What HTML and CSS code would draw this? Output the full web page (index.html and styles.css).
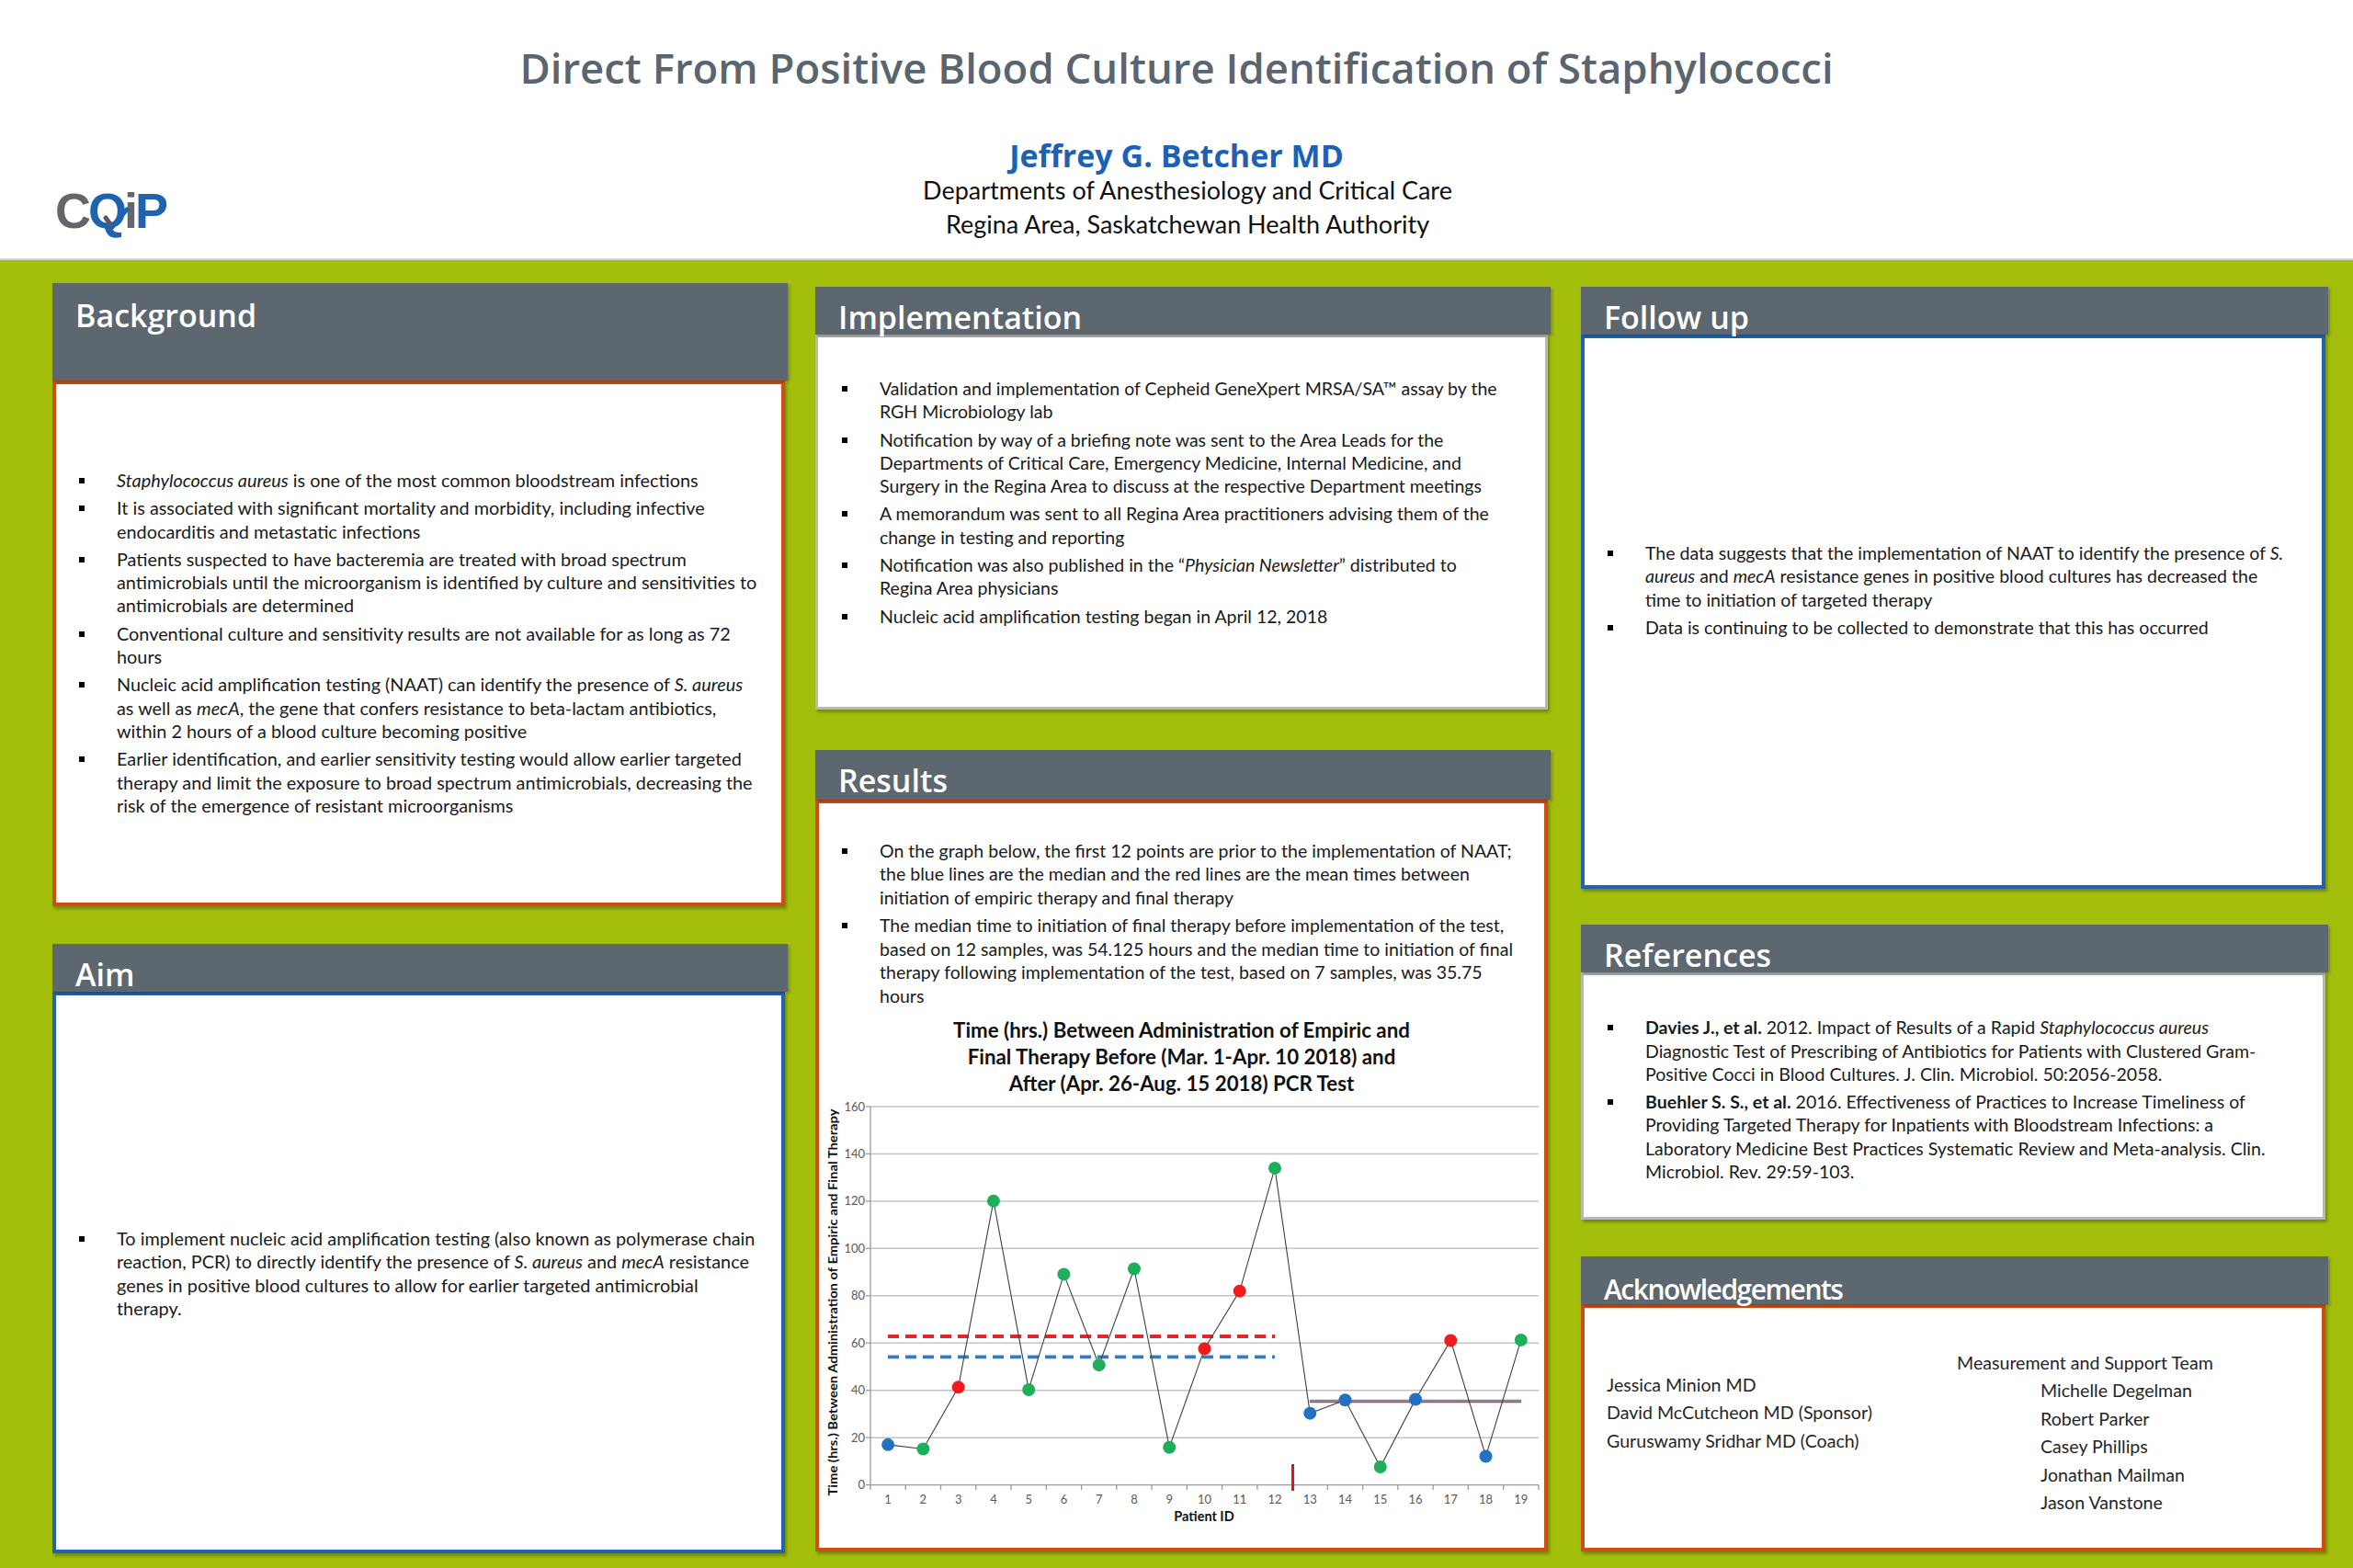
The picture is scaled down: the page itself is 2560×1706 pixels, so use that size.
FILE: index.html
```html
<!DOCTYPE html>
<html lang="en">
<head>
<meta charset="utf-8">
<title>Direct From Positive Blood Culture Identification of Staphylococci</title>
<link rel="stylesheet" href="styles.css">
</head>
<body>
<header class="top">
  <div class="logo">
    <span class="lg-grey">C</span><span class="lg-blue">Q</span><span class="lg-grey">i</span><span class="lg-blue">P</span>
    <svg class="lg-check" width="40" height="30" viewBox="0 0 40 30">
      <path d="M3 12 L10 22" stroke="#555b61" stroke-width="5" stroke-linecap="round" fill="none"/>
      <path d="M10 22 L26 3" stroke="#1f63b0" stroke-width="5" stroke-linecap="round" fill="none"/>
    </svg>
  </div>
  <div class="titles">
    <h1 class="title">Direct From Positive Blood Culture Identification of Staphylococci</h1>
    <div class="author">Jeffrey G. Betcher MD</div>
    <div class="dept">Departments of Anesthesiology and Critical Care</div>
    <div class="dept">Regina Area, Saskatchewan Health Authority</div>
  </div>
</header>

<main class="board">
  <section class="col col1">
    <div class="panel">
      <h2 class="ph ph-tall">Background</h2>
      <div class="pb b-orange body-bg">
        <ul class="bl">
          <li><span><i>Staphylococcus aureus</i> is one of the most common bloodstream infections</span></li>
          <li><span>It is associated with significant mortality and morbidity, including infective<br>endocarditis and metastatic infections</span></li>
          <li><span>Patients suspected to have bacteremia are treated with broad spectrum<br>antimicrobials until the microorganism is identified by culture and sensitivities to<br>antimicrobials are determined</span></li>
          <li><span>Conventional culture and sensitivity results are not available for as long as 72<br>hours</span></li>
          <li><span>Nucleic acid amplification testing (NAAT) can identify the presence of <i>S. aureus</i><br>as well as <i>mecA</i>, the gene that confers resistance to beta-lactam antibiotics,<br>within 2 hours of a blood culture becoming positive</span></li>
          <li><span>Earlier identification, and earlier sensitivity testing would allow earlier targeted<br>therapy and limit the exposure to broad spectrum antimicrobials, decreasing the<br>risk of the emergence of resistant microorganisms</span></li>
        </ul>
      </div>
    </div>
    <div class="panel gap-aim">
      <h2 class="ph">Aim</h2>
      <div class="pb b-blue body-aim">
        <ul class="bl">
          <li><span>To implement nucleic acid amplification testing (also known as polymerase chain<br>reaction, PCR) to directly identify the presence of <i>S. aureus</i> and <i>mecA</i> resistance<br>genes in positive blood cultures to allow for earlier targeted antimicrobial<br>therapy.</span></li>
        </ul>
      </div>
    </div>
  </section>

  <section class="col col2">
    <div class="panel">
      <h2 class="ph">Implementation</h2>
      <div class="pb b-grey body-impl">
        <ul class="bl">
          <li><span>Validation and implementation of Cepheid GeneXpert MRSA/SA™ assay by the<br>RGH Microbiology lab</span></li>
          <li><span>Notification by way of a briefing note was sent to the Area Leads for the<br>Departments of Critical Care, Emergency Medicine, Internal Medicine, and<br>Surgery in the Regina Area to discuss at the respective Department meetings</span></li>
          <li><span>A memorandum was sent to all Regina Area practitioners advising them of the<br>change in testing and reporting</span></li>
          <li><span>Notification was also published in the “<i>Physician Newsletter</i>” distributed to<br>Regina Area physicians</span></li>
          <li><span>Nucleic acid amplification testing began in April 12, 2018</span></li>
        </ul>
      </div>
    </div>
    <div class="panel gap-res">
      <h2 class="ph ph-res">Results</h2>
      <div class="pb b-orange body-res">
        <ul class="bl">
          <li><span>On the graph below, the first 12 points are prior to the implementation of NAAT;<br>the blue lines are the median and the red lines are the mean times between<br>initiation of empiric therapy and final therapy</span></li>
          <li><span>The median time to initiation of final therapy before implementation of the test,<br>based on 12 samples, was 54.125 hours and the median time to initiation of final<br>therapy following implementation of the test, based on 7 samples, was 35.75<br>hours</span></li>
        </ul>
        <div class="chart-title">Time (hrs.) Between Administration of Empiric and<br>Final Therapy Before (Mar. 1-Apr. 10 2018) and<br>After (Apr. 26-Aug. 15 2018) PCR Test</div>
        <svg class="chart" width="789" height="470" viewBox="0 0 789 470">
          <g stroke="#c4c4c4" stroke-width="1.5">
            <line x1="56" y1="11" x2="783" y2="11"/>
            <line x1="56" y1="62.45" x2="783" y2="62.45"/>
            <line x1="56" y1="113.9" x2="783" y2="113.9"/>
            <line x1="56" y1="165.35" x2="783" y2="165.35"/>
            <line x1="56" y1="216.8" x2="783" y2="216.8"/>
            <line x1="56" y1="268.25" x2="783" y2="268.25"/>
            <line x1="56" y1="319.7" x2="783" y2="319.7"/>
            <line x1="56" y1="371.15" x2="783" y2="371.15"/>
          </g>
          <g stroke="#9a9a9a" stroke-width="1.3">
            <line x1="56" y1="11" x2="56" y2="422.6"/>
            <line x1="56" y1="422.6" x2="783" y2="422.6"/>
            <line x1="51" y1="11" x2="56" y2="11"/>
            <line x1="51" y1="62.45" x2="56" y2="62.45"/>
            <line x1="51" y1="113.9" x2="56" y2="113.9"/>
            <line x1="51" y1="165.35" x2="56" y2="165.35"/>
            <line x1="51" y1="216.8" x2="56" y2="216.8"/>
            <line x1="51" y1="268.25" x2="56" y2="268.25"/>
            <line x1="51" y1="319.7" x2="56" y2="319.7"/>
            <line x1="51" y1="371.15" x2="56" y2="371.15"/>
            <line x1="51" y1="422.6" x2="56" y2="422.6"/>
            <line x1="56" y1="422.6" x2="56" y2="428"/>
            <line x1="94.26" y1="422.6" x2="94.26" y2="428"/>
            <line x1="132.52" y1="422.6" x2="132.52" y2="428"/>
            <line x1="170.78" y1="422.6" x2="170.78" y2="428"/>
            <line x1="209.04" y1="422.6" x2="209.04" y2="428"/>
            <line x1="247.3" y1="422.6" x2="247.3" y2="428"/>
            <line x1="285.56" y1="422.6" x2="285.56" y2="428"/>
            <line x1="323.82" y1="422.6" x2="323.82" y2="428"/>
            <line x1="362.08" y1="422.6" x2="362.08" y2="428"/>
            <line x1="400.34" y1="422.6" x2="400.34" y2="428"/>
            <line x1="438.6" y1="422.6" x2="438.6" y2="428"/>
            <line x1="476.86" y1="422.6" x2="476.86" y2="428"/>
            <line x1="515.12" y1="422.6" x2="515.12" y2="428"/>
            <line x1="553.38" y1="422.6" x2="553.38" y2="428"/>
            <line x1="591.64" y1="422.6" x2="591.64" y2="428"/>
            <line x1="629.9" y1="422.6" x2="629.9" y2="428"/>
            <line x1="668.16" y1="422.6" x2="668.16" y2="428"/>
            <line x1="706.42" y1="422.6" x2="706.42" y2="428"/>
            <line x1="744.68" y1="422.6" x2="744.68" y2="428"/>
            <line x1="782.94" y1="422.6" x2="782.94" y2="428"/>
          </g>
          <g class="ax-y" text-anchor="end">
            <text x="50" y="15.5">160</text>
            <text x="50" y="66.95">140</text>
            <text x="50" y="118.4">120</text>
            <text x="50" y="169.85">100</text>
            <text x="50" y="221.3">80</text>
            <text x="50" y="272.75">60</text>
            <text x="50" y="324.2">40</text>
            <text x="50" y="375.65">20</text>
            <text x="50" y="427.1">0</text>
          </g>
          <g class="ax-x" text-anchor="middle">
            <text x="75.13" y="443">1</text>
            <text x="113.39" y="443">2</text>
            <text x="151.65" y="443">3</text>
            <text x="189.91" y="443">4</text>
            <text x="228.17" y="443">5</text>
            <text x="266.43" y="443">6</text>
            <text x="304.69" y="443">7</text>
            <text x="342.95" y="443">8</text>
            <text x="381.21" y="443">9</text>
            <text x="419.47" y="443">10</text>
            <text x="457.73" y="443">11</text>
            <text x="495.99" y="443">12</text>
            <text x="534.25" y="443">13</text>
            <text x="572.51" y="443">14</text>
            <text x="610.77" y="443">15</text>
            <text x="649.03" y="443">16</text>
            <text x="687.29" y="443">17</text>
            <text x="725.55" y="443">18</text>
            <text x="763.81" y="443">19</text>
          </g>
          <text class="ax-title" x="419" y="462" text-anchor="middle">Patient ID</text>
          <text class="ax-ytitle" x="0" y="0" text-anchor="middle" transform="translate(20 224) rotate(-90)" textLength="421" lengthAdjust="spacingAndGlyphs">Time (hrs.) Between Administration of Empiric and Final Therapy</text>
          <line x1="75" y1="261" x2="496" y2="261" stroke="#e2262b" stroke-width="3.8" stroke-dasharray="12 7"/>
          <line x1="75" y1="283.4" x2="496" y2="283.4" stroke="#2f7cc4" stroke-width="3.8" stroke-dasharray="12 7"/>
          <line x1="534" y1="330.6" x2="764" y2="330.6" stroke="#6a86a8" stroke-width="1.6"/>
          <line x1="534" y1="332.4" x2="764" y2="332.4" stroke="#9b4a66" stroke-width="1.6"/>
          <line x1="515.5" y1="400" x2="515.5" y2="429" stroke="#e8101a" stroke-width="3"/>
          <polyline fill="none" stroke="#3f3f3f" stroke-width="1.1" points="75.13,378.87 113.39,383.5 151.65,316.36 189.91,113.64 228.17,318.93 266.43,193.39 304.69,292.17 342.95,187.47 381.21,381.7 419.47,274.42 457.73,211.65 495.99,77.88 534.25,344.65 572.51,330.25 610.77,403.05 649.03,329.48 687.29,265.42 725.55,391.47 763.81,264.91"/>
          <g>
            <circle cx="75.13" cy="378.87" r="7" fill="#2272c3"/>
            <circle cx="113.39" cy="383.5" r="7" fill="#1fae5a"/>
            <circle cx="151.65" cy="316.36" r="7" fill="#ee1c1c"/>
            <circle cx="189.91" cy="113.64" r="7" fill="#1fae5a"/>
            <circle cx="228.17" cy="318.93" r="7" fill="#1fae5a"/>
            <circle cx="266.43" cy="193.39" r="7" fill="#1fae5a"/>
            <circle cx="304.69" cy="292.17" r="7" fill="#1fae5a"/>
            <circle cx="342.95" cy="187.47" r="7" fill="#1fae5a"/>
            <circle cx="381.21" cy="381.7" r="7" fill="#1fae5a"/>
            <circle cx="419.47" cy="274.42" r="7" fill="#ee1c1c"/>
            <circle cx="457.73" cy="211.65" r="7" fill="#ee1c1c"/>
            <circle cx="495.99" cy="77.88" r="7" fill="#1fae5a"/>
            <circle cx="534.25" cy="344.65" r="7" fill="#2272c3"/>
            <circle cx="572.51" cy="330.25" r="7" fill="#2272c3"/>
            <circle cx="610.77" cy="403.05" r="7" fill="#1fae5a"/>
            <circle cx="649.03" cy="329.48" r="7" fill="#2272c3"/>
            <circle cx="687.29" cy="265.42" r="7" fill="#ee1c1c"/>
            <circle cx="725.55" cy="391.47" r="7" fill="#2272c3"/>
            <circle cx="763.81" cy="264.91" r="7" fill="#1fae5a"/>
          </g>
        </svg>
      </div>
    </div>
  </section>

  <section class="col col3">
    <div class="panel">
      <h2 class="ph">Follow up</h2>
      <div class="pb b-blue body-fu">
        <ul class="bl">
          <li><span>The data suggests that the implementation of NAAT to identify the presence of <i>S.</i><br><i>aureus</i> and <i>mecA</i> resistance genes in positive blood cultures has decreased the<br>time to initiation of targeted therapy</span></li>
          <li><span>Data is continuing to be collected to demonstrate that this has occurred</span></li>
        </ul>
      </div>
    </div>
    <div class="panel gap-ref">
      <h2 class="ph">References</h2>
      <div class="pb b-grey body-ref">
        <ul class="bl">
          <li><span><b>Davies J., et al.</b> 2012. Impact of Results of a Rapid <i>Staphylococcus aureus</i><br>Diagnostic Test of Prescribing of Antibiotics for Patients with Clustered Gram-<br>Positive Cocci in Blood Cultures. J. Clin. Microbiol. 50:2056-2058.</span></li>
          <li><span><b>Buehler S. S., et al.</b> 2016. Effectiveness of Practices to Increase Timeliness of<br>Providing Targeted Therapy for Inpatients with Bloodstream Infections: a<br>Laboratory Medicine Best Practices Systematic Review and Meta-analysis. Clin.<br>Microbiol. Rev. 29:59-103.</span></li>
        </ul>
      </div>
    </div>
    <div class="panel gap-ack">
      <h2 class="ph ph-ack">Acknowledgements</h2>
      <div class="pb b-orange body-ack">
        <div class="ack-left">
          <div>Jessica Minion MD</div>
          <div>David McCutcheon MD (Sponsor)</div>
          <div>Guruswamy Sridhar MD (Coach)</div>
        </div>
        <div class="ack-right">
          <div>Measurement and Support Team</div>
          <div class="ack-name">Michelle Degelman</div>
          <div class="ack-name">Robert Parker</div>
          <div class="ack-name">Casey Phillips</div>
          <div class="ack-name">Jonathan Mailman</div>
          <div class="ack-name">Jason Vanstone</div>
        </div>
      </div>
    </div>
  </section>
</main>
</body>
</html>
```

FILE: styles.css
```css
* { box-sizing: border-box; }
html, body { margin: 0; padding: 0; }
body {
  width: 2560px;
  height: 1706px;
  overflow: hidden;
  background: #a3be0b;
  font-family: Lato, "Liberation Sans", sans-serif;
  color: #1a1a1a;
}

/* ---------- top banner ---------- */
.top {
  height: 283px;
  background: #ffffff;
  border-bottom: 2px solid #d4d6d2;
  display: grid;
  grid-template-columns: 1fr auto 1fr;
}
.logo {
  grid-column: 1;
  grid-row: 1;
  justify-self: start;
  align-self: start;
  margin-left: 60px;
  margin-top: 202px;
  position: relative;
  font-family: "Liberation Sans", Arial, sans-serif;
  font-weight: 700;
  font-size: 54px;
  line-height: 54px;
  letter-spacing: -3px;
  white-space: nowrap;
}
.lg-grey { color: #63666a; }
.lg-blue { color: #1f63b0; }
.lg-check {
  position: absolute;
  left: 52px;
  top: 23px;
}
.titles {
  grid-column: 2;
  grid-row: 1;
  text-align: center;
  padding-top: 45px;
}
.title {
  margin: 0;
  font-family: "Open Sans", sans-serif;
  font-weight: 600;
  font-size: 45.5px;
  line-height: 56px;
  color: #5a6570;
  white-space: nowrap;
}
.author {
  margin-top: 48px;
  font-family: "Open Sans", sans-serif;
  font-weight: 700;
  font-size: 34px;
  line-height: 40px;
  color: #1b62b5;
}
.dept {
  margin-left: 24px;
  font-family: Lato, sans-serif;
  font-size: 27px;
  line-height: 36px;
  color: #111;
}
.dept + .dept { line-height: 38px; }

/* ---------- board ---------- */
.board {
  display: flex;
  align-items: flex-start;
  padding-left: 57px;
}
.col { display: flex; flex-direction: column; }
.col1 { width: 800px; padding-top: 25px; }
.col2 { width: 800px; margin-left: 30px; padding-top: 29px; }
.col3 { width: 813px; margin-left: 33px; padding-top: 29px; }

.gap-aim { margin-top: 41px; }
.gap-res { margin-top: 44px; }
.gap-ref { margin-top: 39px; }
.gap-ack { margin-top: 40px; }

.ph {
  margin: 0;
  height: 52px;
  padding: 16px 0 0 25px;
  background: #5d6770;
  color: #ffffff;
  font-family: "Open Sans", sans-serif;
  font-weight: 600;
  font-size: 34px;
  line-height: 34px;
  position: relative;
  z-index: 1;
  box-shadow: 2px 2px 3px rgba(0,0,0,0.25);
  white-space: nowrap;
}
.ph-tall { height: 106px; padding-top: 18px; }
.ph-res { height: 54px; padding-top: 16px; }
.ph-ack {
  font-size: 30px;
  letter-spacing: -1.5px;
  padding-top: 19px;
}

.pb {
  background: #ffffff;
  margin-right: 3px;
  box-shadow: 2px 3px 3px rgba(0,0,0,0.28);
}
.b-orange { border: 4px solid #cf4c15; }
.b-blue { border: 4px solid #2263ad; }
.b-grey { border: 3px solid #b8b8b8; }

.body-bg { height: 572px; padding: 92px 0 0 25px; }
.body-aim { height: 611px; padding: 252px 0 0 25px; }
.body-impl { height: 408px; padding: 43px 0 0 26px; }
.body-res { height: 818px; padding: 38.5px 0 0 25px; }
.body-fu { height: 603px; padding: 220.5px 0 0 25px; }
.body-ref { height: 269px; padding: 44px 0 0 26px; }
.body-ack {
  height: 269px;
  padding: 44.75px 0 0 24px;
  display: flex;
  font-size: 19.6px;
  line-height: 30.5px;
  color: #262626;
}

/* bullet lists */
.bl {
  list-style: none;
  margin: 0;
  padding: 0;
  font-size: 19.55px;
  line-height: 25.3px;
}
.body-bg .bl, .body-aim .bl { font-size: 19.85px; }
.bl li {
  display: grid;
  grid-template-columns: 41px auto;
  margin-bottom: 5px;
  white-space: nowrap;
}
.bl li::before {
  content: "";
  width: 6px;
  height: 6px;
  background: #000;
  margin-top: 10px;
}
.body-res .bl, .body-ref .bl, .body-fu .bl { line-height: 25.5px; }
.body-ref .bl li { margin-bottom: 4px; }

/* results chart */
.chart-title {
  margin: 9.5px 0 0 -25px;
  text-align: center;
  font-weight: 700;
  font-size: 22.3px;
  line-height: 29px;
  color: #111;
}
.chart {
  display: block;
  margin-left: -25px;
}
.ax-y, .ax-x {
  font-family: Lato, sans-serif;
  font-size: 13px;
  fill: #595959;
}
.ax-title {
  font-family: Lato, sans-serif;
  font-weight: 700;
  font-size: 14.5px;
  fill: #111;
}
.ax-ytitle {
  font-family: Lato, sans-serif;
  font-weight: 700;
  font-size: 13.5px;
  fill: #111;
}

/* acknowledgements */
.ack-left { width: 381px; padding-top: 24px; }
.ack-name { padding-left: 91px; }
```
